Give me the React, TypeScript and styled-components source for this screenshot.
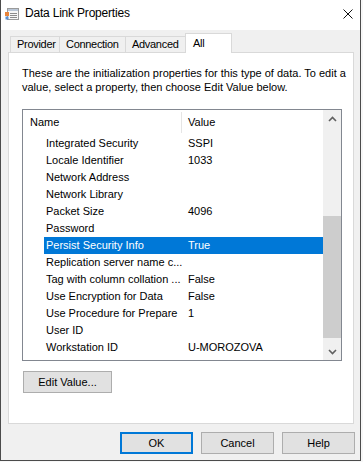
import React from "react";
import styled, { createGlobalStyle } from "styled-components";

const GlobalStyle = createGlobalStyle`
  html, body { margin: 0; padding: 0; background: #f7f7f7; }
  body { font-family: "Liberation Sans", Arial, sans-serif; font-size: 11px; color: #000; }
  * { box-sizing: border-box; }
`;

const Window = styled.div`
  width: 361px;
  height: 461px;
  border: 1px solid #4b4b4b;
  border-top: none;
  display: flex;
  flex-direction: column;
  background: #f0f0f0;
`;

const TitleBar = styled.div`
  height: 30px;
  flex: none;
  background: #fff;
  display: flex;
  align-items: flex-start;
`;

const AppIcon = styled.svg`
  flex: none;
  margin: 6px 0 0 3px;
`;

const Title = styled.div`
  margin: 5px 0 0 5px;
  font-size: 12px;
  line-height: 16px;
  letter-spacing: -0.2px;
`;

const CloseIcon = styled.svg`
  flex: none;
  margin: 9px 7px 0 auto;
`;

const Body = styled.div`
  flex: 1;
  display: flex;
  flex-direction: column;
  padding: 3px 6px 6px 7px;
`;

const TabStrip = styled.div`
  height: 19px;
  flex: none;
  display: flex;
  align-items: flex-end;
  padding-left: 2px;
  position: relative;
  z-index: 1;
`;

const Tab = styled.div<{ $w: number; $active?: boolean; $first?: boolean }>`
  width: ${(p) => p.$w}px;
  height: ${(p) => (p.$active ? 20 : 16)}px;
  margin-left: ${(p) => (p.$first ? 0 : p.$active ? -3 : -1)}px;
  margin-bottom: ${(p) => (p.$active ? -1 : 0)}px;
  padding: ${(p) => (p.$active ? "2px 0 0 7px" : "0 0 0 6px")};
  background: ${(p) => (p.$active ? "#fff" : "#f0f0f0")};
  border: 1px solid #d9d9d9;
  border-bottom: none;
  text-align: left;
  white-space: nowrap;
  line-height: 15px;
  letter-spacing: -0.3px;
  position: relative;
  z-index: ${(p) => (p.$active ? 2 : 1)};
`;

const Panel = styled.div`
  flex: 1;
  background: #fff;
  border: 1px solid #d9d9d9;
  padding: 13px 0 0 13px;
  display: flex;
  flex-direction: column;
  align-items: flex-start;
`;

const Intro = styled.p`
  margin: 0;
  line-height: 14px;
  white-space: nowrap;
`;

const ListView = styled.div`
  margin-top: 15px;
  width: 320px;
  height: 252px;
  border: 1px solid #828790;
  display: flex;
  background: #fff;
  overflow: hidden;
`;

const ListArea = styled.div`
  flex: 1;
  display: flex;
  flex-direction: column;
`;

const Header = styled.div`
  height: 25px;
  flex: none;
  display: flex;
  align-items: center;
`;

const HeaderCell = styled.div<{ $w?: number; $pad: number; $sep?: boolean }>`
  ${(p) => (p.$w ? `width: ${p.$w}px; flex: none;` : "flex: 1;")}
  height: 21px;
  line-height: 21px;
  padding-left: ${(p) => p.$pad}px;
  border-right: ${(p) => (p.$sep ? "1px solid #e5e5e5" : "none")};
`;

const Row = styled.div`
  height: 17px;
  flex: none;
  display: flex;
  padding-left: 21px;
`;

const RowBody = styled.div<{ $selected?: boolean }>`
  flex: 1;
  display: flex;
  line-height: 17px;
  background: ${(p) => (p.$selected ? "#0078d7" : "transparent")};
  color: ${(p) => (p.$selected ? "#fff" : "#000")};
`;

const NameCell = styled.div`
  width: 144px;
  flex: none;
  padding-left: 2px;
  white-space: nowrap;
  overflow: hidden;
`;

const ValueCell = styled.div`
  flex: 1;
  white-space: nowrap;
`;

const ScrollBar = styled.div`
  width: 18px;
  flex: none;
  background: #f0f0f0;
  display: flex;
  flex-direction: column;
`;

const ArrowBox = styled.div`
  height: 17px;
  flex: none;
  display: flex;
  align-items: center;
  justify-content: center;
`;

const Track = styled.div`
  flex: 1;
  display: flex;
  flex-direction: column;
`;

const Thumb = styled.div<{ $top: number; $h: number }>`
  margin-top: ${(p) => p.$top}px;
  height: ${(p) => p.$h}px;
  background: #cdcdcd;
`;

const Button = styled.button<{ $default?: boolean; $w: number }>`
  width: ${(p) => p.$w}px;
  height: 22px;
  padding: 0;
  background: #e1e1e1;
  border: 1px solid ${(p) => (p.$default ? "#0078d7" : "#adadad")};
  box-shadow: ${(p) => (p.$default ? "inset 0 0 0 1px #0078d7" : "none")};
  font-family: "Liberation Sans", Arial, sans-serif;
  font-size: 11px;
  color: #000;
  line-height: 18px;
`;

const EditButton = styled(Button)`
  margin: 10px 0 0 1px;
`;

const ButtonRow = styled.div`
  margin: 8px -1px 0 0;
  height: 22px;
  flex: none;
  display: flex;
  justify-content: flex-end;
  gap: 8px;
`;

const rows: [string, string][] = [
  ["Integrated Security", "SSPI"],
  ["Locale Identifier", "1033"],
  ["Network Address", ""],
  ["Network Library", ""],
  ["Packet Size", "4096"],
  ["Password", ""],
  ["Persist Security Info", "True"],
  ["Replication server name c...", ""],
  ["Tag with column collation ...", "False"],
  ["Use Encryption for Data", "False"],
  ["Use Procedure for Prepare", "1"],
  ["User ID", ""],
  ["Workstation ID", "U-MOROZOVA"],
];

const Chevron = ({ up }: { up?: boolean }) => (
  <svg width="9" height="6" viewBox="0 0 9 6">
    <path
      d={up ? "M1 5 L4.5 1.5 L8 5" : "M1 1 L4.5 4.5 L8 1"}
      fill="none"
      stroke="#606060"
      strokeWidth="1.6"
    />
  </svg>
);

export default function App() {
  return (
    <>
      <GlobalStyle />
      <Window>
        <TitleBar>
          <AppIcon width="16" height="16" viewBox="0 0 16 16">
            <rect x="3.5" y="2.5" width="11" height="11" fill="#f7f7f7" stroke="#9a9a9a" />
            <rect x="4" y="3" width="10" height="2" fill="#b9c6d6" />
            <line x1="6" y1="7.5" x2="13" y2="7.5" stroke="#8c8c8c" />
            <line x1="6" y1="9.5" x2="13" y2="9.5" stroke="#8c8c8c" />
            <line x1="6" y1="11.5" x2="13" y2="11.5" stroke="#8c8c8c" />
            <rect x="1" y="6" width="4" height="4" fill="#e8843a" />
            <rect x="1.5" y="10.5" width="3" height="3" fill="#5b8fd0" />
          </AppIcon>
          <Title>Data Link Properties</Title>
          <CloseIcon width="10" height="10" viewBox="0 0 10 10">
            <path d="M0.5 0.5 L9.5 9.5 M9.5 0.5 L0.5 9.5" stroke="#111" strokeWidth="1" />
          </CloseIcon>
        </TitleBar>
        <Body>
          <TabStrip>
            <Tab $w={50} $first>Provider</Tab>
            <Tab $w={67}>Connection</Tab>
            <Tab $w={63}>Advanced</Tab>
            <Tab $w={47} $active>All</Tab>
          </TabStrip>
          <Panel>
            <Intro>
              These are the initialization properties for this type of data. To edit a
              <br />
              value, select a property, then choose Edit Value below.
            </Intro>
            <ListView>
              <ListArea>
                <Header>
                  <HeaderCell $w={159} $pad={7} $sep>Name</HeaderCell>
                  <HeaderCell $pad={6}>Value</HeaderCell>
                </Header>
                {rows.map(([n, v]) => (
                  <Row key={n}>
                    <RowBody $selected={n === "Persist Security Info"}>
                      <NameCell>{n}</NameCell>
                      <ValueCell>{v}</ValueCell>
                    </RowBody>
                  </Row>
                ))}
              </ListArea>
              <ScrollBar>
                <ArrowBox><Chevron up /></ArrowBox>
                <Track>
                  <Thumb $top={89} $h={122} />
                </Track>
                <ArrowBox><Chevron /></ArrowBox>
              </ScrollBar>
            </ListView>
            <EditButton $w={89}>Edit Value...</EditButton>
          </Panel>
          <ButtonRow>
            <Button $w={73} $default>OK</Button>
            <Button $w={73}>Cancel</Button>
            <Button $w={73}>Help</Button>
          </ButtonRow>
        </Body>
      </Window>
    </>
  );
}
